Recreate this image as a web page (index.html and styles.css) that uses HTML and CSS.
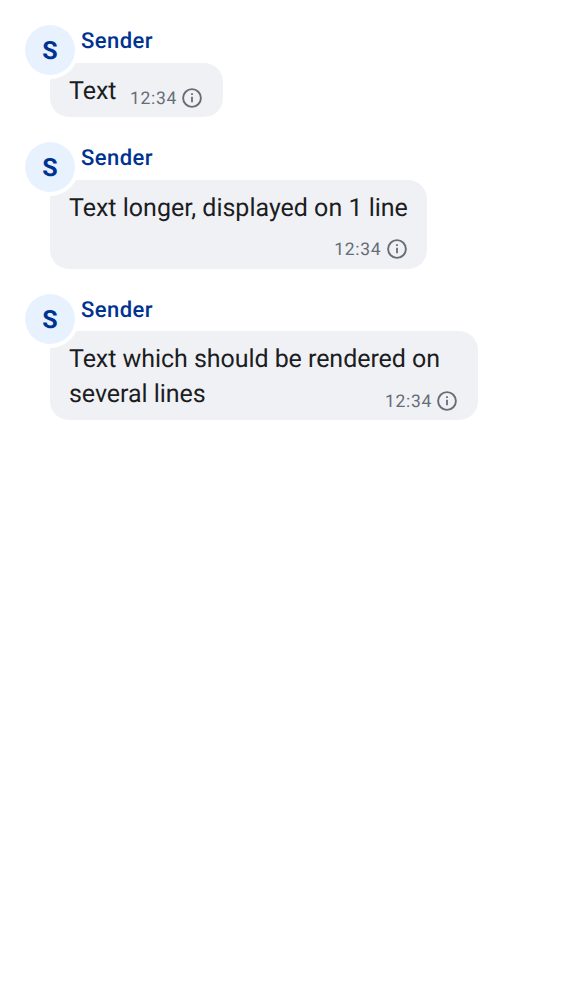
FILE: index.html
```html
<!DOCTYPE html>
<html lang="en">
<head>
<meta charset="utf-8">
<title>Messages</title>
<link rel="stylesheet" href="styles.css">
</head>
<body>
<svg class="defs" width="0" height="0"><symbol id="info" viewBox="0 0 20 20"><circle cx="10" cy="10" r="8.9" fill="none" stroke="currentColor" stroke-width="1.9"/><path d="M10 5.3v1.8M10 8.8v5.4" stroke="currentColor" stroke-width="1.8"/></symbol></svg>
<main class="timeline">
  <article class="message short">
    <div class="avatar">S</div>
    <div class="sender">Sender</div>
    <div class="bubble"><p class="text">Text</p><div class="meta"><time>12:34</time><svg class="icon"><use href="#info"/></svg></div></div>
  </article>
  <article class="message single">
    <div class="avatar">S</div>
    <div class="sender">Sender</div>
    <div class="bubble"><p class="text">Text longer, displayed on 1 line</p><div class="meta"><time>12:34</time><svg class="icon"><use href="#info"/></svg></div></div>
  </article>
  <article class="message multi">
    <div class="avatar">S</div>
    <div class="sender">Sender</div>
    <div class="bubble"><p class="text">Text which should be rendered on<br>several lines</p><div class="meta"><time>12:34</time><svg class="icon"><use href="#info"/></svg></div></div>
  </article>
</main>
</body>
</html>
```
FILE: styles.css
```css
body { margin: 0; background: #fff; font-family: Roboto, sans-serif; text-rendering: geometricPrecision; }
.defs { position: absolute; }
.timeline { padding: 25px 25px 0; }
.message {
  display: grid;
  grid-template-columns: 25px 1fr;
  grid-template-rows: 38px auto;
  justify-items: start;
  margin-bottom: 25px;
}
.avatar {
  grid-area: 1 / 1;
  z-index: 1;
  width: 50px;
  height: 50px;
  border-radius: 50%;
  box-shadow: 0 0 0 4px #fff;
  background: #e8f2ff;
  color: #003391;
  font-size: 25px;
  font-weight: 700;
  line-height: 53px;
  text-align: center;
}
.sender {
  grid-area: 1 / 2;
  margin-left: 31px;
  color: #003391;
  font-size: 22px;
  font-weight: 500;
  line-height: 33px;
  letter-spacing: 0.45px;
}
.bubble {
  grid-area: 2 / 2;
  box-sizing: border-box;
  display: grid;
  padding: 11px 20px 8px 19px;
  border-radius: 19px;
  background: #f0f1f5;
}
.text {
  margin: 0;
  color: #1b1d22;
  font-size: 25px;
  line-height: 35px;
  white-space: nowrap;
}
.meta {
  display: flex;
  align-items: center;
  align-self: end;
  justify-self: end;
  height: 20px;
  margin: 0 1px 1px 0;
  gap: 5px;
  color: #656d77;
  font-size: 17.5px;
  line-height: 20px;
  letter-spacing: 0.7px;
}
.meta time { padding-top: 1px; }
.icon { width: 20px; height: 20px; }
.multi { grid-template-rows: 37.5px auto; }
.short .bubble { grid-template-columns: auto auto; width: 173px; height: 54px; }
.single .bubble { width: 377px; height: 88.5px; }
.single .meta { margin-bottom: 2px; gap: 5.5px; }
.single time { padding-top: 2px; }
.multi .bubble { width: 428px; height: 89px; }
.multi .text { letter-spacing: -0.05px; }
.multi .text, .multi .meta { grid-area: 1 / 1; }
```
